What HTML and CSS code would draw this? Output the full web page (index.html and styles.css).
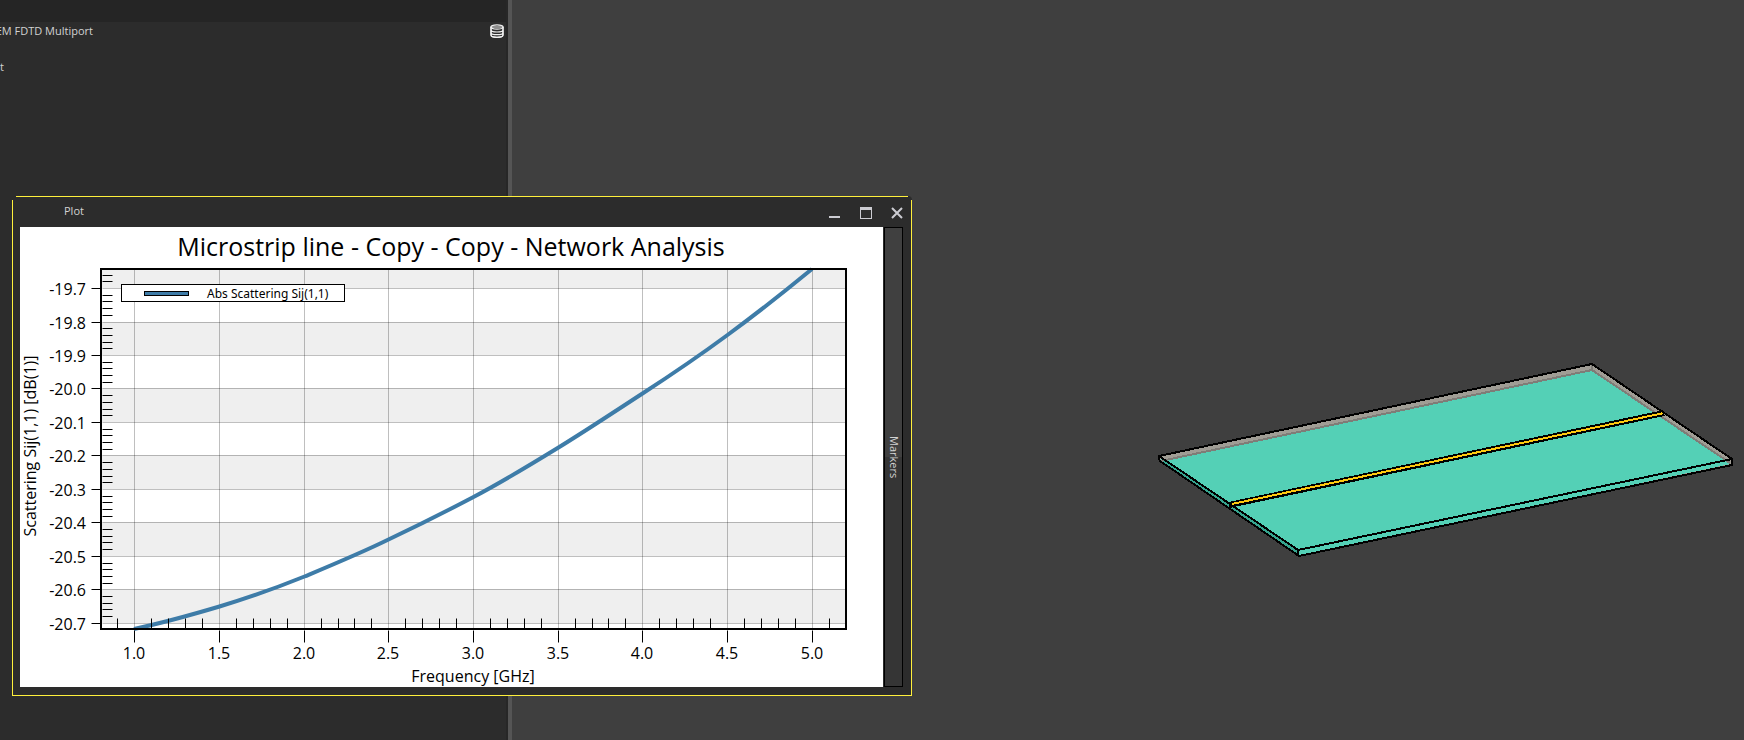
FILE: index.html
```html
<!DOCTYPE html>
<html lang="en">
<head>
<meta charset="utf-8">
<title>Plot</title>
<link rel="stylesheet" href="styles.css">
</head>
<body>
<div class="workspace">
  <aside class="sidebar">
    <div class="sidebar-head"></div>
    <ul class="tree">
      <li class="tree-row">
        <span class="tree-label">EM FDTD Multiport</span>
        <svg class="db-icon" viewBox="0 0 14 14" aria-hidden="true">
          <path d="M1 3v8c0 1.400 2.500 2.300 6 2.300s6-.9 6-2.300V3z" fill="#2c2c2c"/>
          <ellipse cx="7" cy="3" rx="6" ry="2.200"/>
          <path d="M1 3v8c0 1.300 2.500 2.300 6 2.300s6-1 6-2.300V3M1 5.700C1 7 3.500 8 7 8s6-1 6-2.300M1 8.400c0 1.300 2.500 2.300 6 2.300s6-1 6-2.300"/>
        </svg>
      </li>
      <li class="tree-row tree-row-child"><span class="tree-label">t</span></li>
    </ul>
  </aside>
  <div class="splitter"></div>
  <main class="viewport">
    <svg class="scene" viewBox="512 0 1232 740" role="img" aria-label="Microstrip line model">
      <path class="wall" d="M1159 456 1592 364 1732 459V465L1299 556 1160 461Z"/>
      <path class="floor" d="M1163 461 1592 371 1730 464 1299 556 1298 550Z"/>
      <path class="floor" d="M1162 458 1298 550 1299 556 1161 461Z"/>
      <path class="side" d="M1160 461 1162 459 1298 550 1299 556Z"/>
      <path class="hidden-edge" d="M1161 461 1592 370 1730 463M1592 365V370"/>
      <path class="strip-edge" d="M1229 505 1664 413"/>
      <path class="strip" d="M1232 504 1664 413"/>
      <path class="edge" d="M1159 456 1592 364 1732 459V465L1299 556 1160 461Q1158 458 1159 456L1298 550 1732 459M1298 550V556"/>
    </svg>
  </main>
</div>

<section class="window" aria-label="Plot">
  <header class="titlebar">
    <h1 class="window-title">Plot</h1>
    <div class="controls">
      <button class="control" type="button" aria-label="Minimize"><svg viewBox="0 0 12 12"><path d="M0 9h11v2H0z"/></svg></button>
      <button class="control" type="button" aria-label="Maximize"><svg viewBox="0 0 12 12"><path fill-rule="evenodd" d="M0 0h12v12H0zM1 3v8h10V3z"/></svg></button>
      <button class="control" type="button" aria-label="Close"><svg viewBox="0 0 12 12"><path class="cross" d="M1 1 11 11M11 1 1 11"/></svg></button>
    </div>
  </header>
  <div class="window-body">
    <svg class="chart" viewBox="20 227 863 460" role="img" aria-label="Abs Scattering Sij(1,1) against frequency">
      <text class="chart-title" x="451" y="256">Microstrip line - Copy - Copy - Network Analysis</text>
      <path class="band" d="M101 269H846V288H101zM101 322H846V355H101zM101 388H846V422H101zM101 455H846V489H101zM101 522H846V556H101zM101 589H846V623H101z"/>
      <g transform="translate(.5 .5)">
        <path class="grid" d="M102 288H845M102 322H845M102 355H845M102 388H845M102 422H845M102 455H845M102 489H845M102 522H845M102 556H845M102 589H845M102 623H845"/>
        <path class="grid" d="M134 269V628M219 269V628M304 269V628M388 269V628M473 269V628M558 269V628M642 269V628M727 269V628M812 269V628"/>
      </g>
      <path class="curve" d="M134 629C162 623 191 615 219.500 606.500C248 598 276 588 304.500 576.500C332 565 361 553 388.500 539.500C417 526 445 512 473.500 497C502 482 530 465 558.500 447.500C587 430 614 412 642.500 393.500C671 375 699 356 727.500 335C756 314 784 292 812 269"/>
      <g transform="translate(.5 .5)">
        <path class="tick" d="M91 288h9M91 322h9M91 355h9M91 388h9M91 422h9M91 455h9M91 489h9M91 522h9M91 556h9M91 589h9M91 623h9"/>
        <path class="tick" d="M134 630v12M219 630v12M304 630v12M388 630v12M473 630v12M558 630v12M642 630v12M727 630v12M812 630v12"/>
        <path class="tick" d="M102 275h10M102 281h10M102 295h10M102 301h10M102 308h10M102 315h10M102 328h10M102 335h10M102 342h10M102 348h10M102 362h10M102 368h10M102 375h10M102 382h10M102 395h10M102 402h10M102 409h10M102 415h10M102 429h10M102 435h10M102 442h10M102 449h10M102 462h10M102 469h10M102 476h10M102 482h10M102 496h10M102 502h10M102 509h10M102 516h10M102 529h10M102 536h10M102 542h10M102 549h10M102 563h10M102 569h10M102 576h10M102 583h10M102 596h10M102 603h10M102 609h10M102 616h10"/>
        <path class="tick" d="M117 618v10M151 618v10M168 618v10M185 618v10M202 618v10M236 618v10M253 618v10M270 618v10M287 618v10M321 618v10M338 618v10M354 618v10M371 618v10M405 618v10M422 618v10M439 618v10M456 618v10M490 618v10M507 618v10M524 618v10M541 618v10M575 618v10M592 618v10M608 618v10M625 618v10M659 618v10M676 618v10M693 618v10M710 618v10M744 618v10M761 618v10M778 618v10M795 618v10M829 618v10"/>
      </g>
      <rect class="frame" x="101" y="269" width="745" height="360"/>
      <g class="y-labels">
        <text x="86" y="295">-19.7</text><text x="86" y="329">-19.8</text><text x="86" y="362">-19.9</text><text x="86" y="395">-20.0</text><text x="86" y="429">-20.1</text><text x="86" y="462">-20.2</text><text x="86" y="496">-20.3</text><text x="86" y="529">-20.4</text><text x="86" y="563">-20.5</text><text x="86" y="596">-20.6</text><text x="86" y="630">-20.7</text>
      </g>
      <g class="x-labels">
        <text x="134" y="659">1.0</text><text x="219" y="659">1.5</text><text x="304" y="659">2.0</text><text x="388" y="659">2.5</text><text x="473" y="659">3.0</text><text x="558" y="659">3.5</text><text x="642" y="659">4.0</text><text x="727" y="659">4.5</text><text x="812" y="659">5.0</text>
        <text x="473" y="682">Frequency [GHz]</text>
        <text transform="translate(36 446) rotate(-90)">Scattering Sij(1,1) [dB(1)]</text>
      </g>
      <g transform="translate(.5 .5)">
        <rect class="legend-box" x="121" y="284" width="223" height="17"/>
        <rect class="legend-swatch" x="144" y="291" width="44" height="4"/>
      </g>
      <text class="legend-text" x="207" y="298">Abs Scattering Sij(1,1)</text>
    </svg>
    <button class="markers" type="button">Markers</button>
  </div>
</section>
</body>
</html>
```
FILE: styles.css
```css
* { box-sizing: border-box; }

body {
  margin: 0;
  background: #3f3f3f;
  color: #d2d2d2;
  font-family: "Open Sans", "Noto Sans", sans-serif;
  font-size: 11px;
  line-height: 16px;
}

.workspace {
  display: grid;
  grid-template-columns: 508px 4px 1fr;
  height: 100vh;
}

.sidebar {
  background: #2c2c2c;
  border-right: 2px solid #272727;
}

.sidebar-head { height: 22px; background: #252525; }

.tree { margin: 0; padding: 0; list-style: none; }

.tree-row {
  display: flex;
  align-items: center;
  justify-content: space-between;
  height: 18px;
  padding-right: 2px;
}

.tree-row-child { margin-top: 18px; }

.tree-label {
  display: flex;
  justify-content: flex-end;
  width: 93px;
  white-space: nowrap;
}

.tree-row-child .tree-label { width: 4px; }

.db-icon {
  width: 14px;
  height: 14px;
  fill: none;
  stroke: #f0f0f0;
  stroke-width: 1.2;
}

.splitter { background: #555; }

.viewport { background: #3f3f3f; overflow: hidden; }

.scene { display: block; width: 100%; height: 100%; shape-rendering: crispEdges; }
.wall { fill: #a09d95; }
.floor { fill: #54d0b6; }
.side { fill: #36a58f; }
.hidden-edge { fill: none; stroke: #7f7c77; stroke-width: 2; }
.edge { fill: none; stroke: #000; stroke-width: 2; }
.strip-edge { stroke: #000; stroke-width: 6; }
.strip { stroke: #ffc90e; stroke-width: 2; }

.window {
  position: absolute;
  left: 12px;
  top: 196px;
  width: 900px;
  padding: 1px 9px 9px 8px;
  border-radius: 4px 4px 0 0;
  background: #2c2c2c;
}

/* the outline is open at both top corners */
.window::before,
.window::after {
  content: "";
  position: absolute;
  pointer-events: none;
}

.window::before {
  left: 4px;
  right: 4px;
  top: 0;
  height: 1px;
  background: #fff03c;
}

.window::after {
  inset: 4px 0 0;
  border: 1px solid #fff03c;
  border-top: 0;
}

.titlebar {
  display: flex;
  align-items: center;
  justify-content: space-between;
  height: 30px;
  padding-left: 44px;
}

.window-title { margin: 0; padding-bottom: 2px; font-size: 11px; font-weight: 400; }

.controls { display: flex; gap: 19px; padding-top: 2px; }

.control {
  width: 12px;
  height: 12px;
  padding: 0;
  border: 0;
  background: none;
}

.control svg { display: block; width: 12px; height: 12px; fill: #ccccd2; }
.cross { stroke: #ccccd2; stroke-width: 2; }

.window-body { display: flex; }

.chart { flex: 1; min-width: 0; height: auto; background: #fff; overflow: visible; }

.markers {
  flex: none;
  width: 19px;
  margin-left: 1px;
  padding: 0;
  border: 1px solid #000;
  background: linear-gradient(#404040 50%, #353535 50%);
  color: #d2d2d2;
  font: inherit;
  writing-mode: vertical-rl;
  text-align: center;
}

.chart text { fill: #000; font-size: 16px; }
.chart .chart-title { font-size: 25px; text-anchor: middle; }
.chart .legend-text { font-family: "Noto Sans", "Open Sans", sans-serif; font-size: 12px; }
.y-labels { text-anchor: end; }
.x-labels { text-anchor: middle; }
.band { fill: #efefef; }
.grid { stroke: #000; stroke-opacity: .25; }
.tick { stroke: #000; }
.frame { fill: none; stroke: #000; stroke-width: 2; }
.curve { fill: none; stroke: #3e7ca8; stroke-width: 4; }
.legend-box { fill: #fff; stroke: #000; }
.legend-swatch { fill: #3e7ca8; stroke: #000; }
```
